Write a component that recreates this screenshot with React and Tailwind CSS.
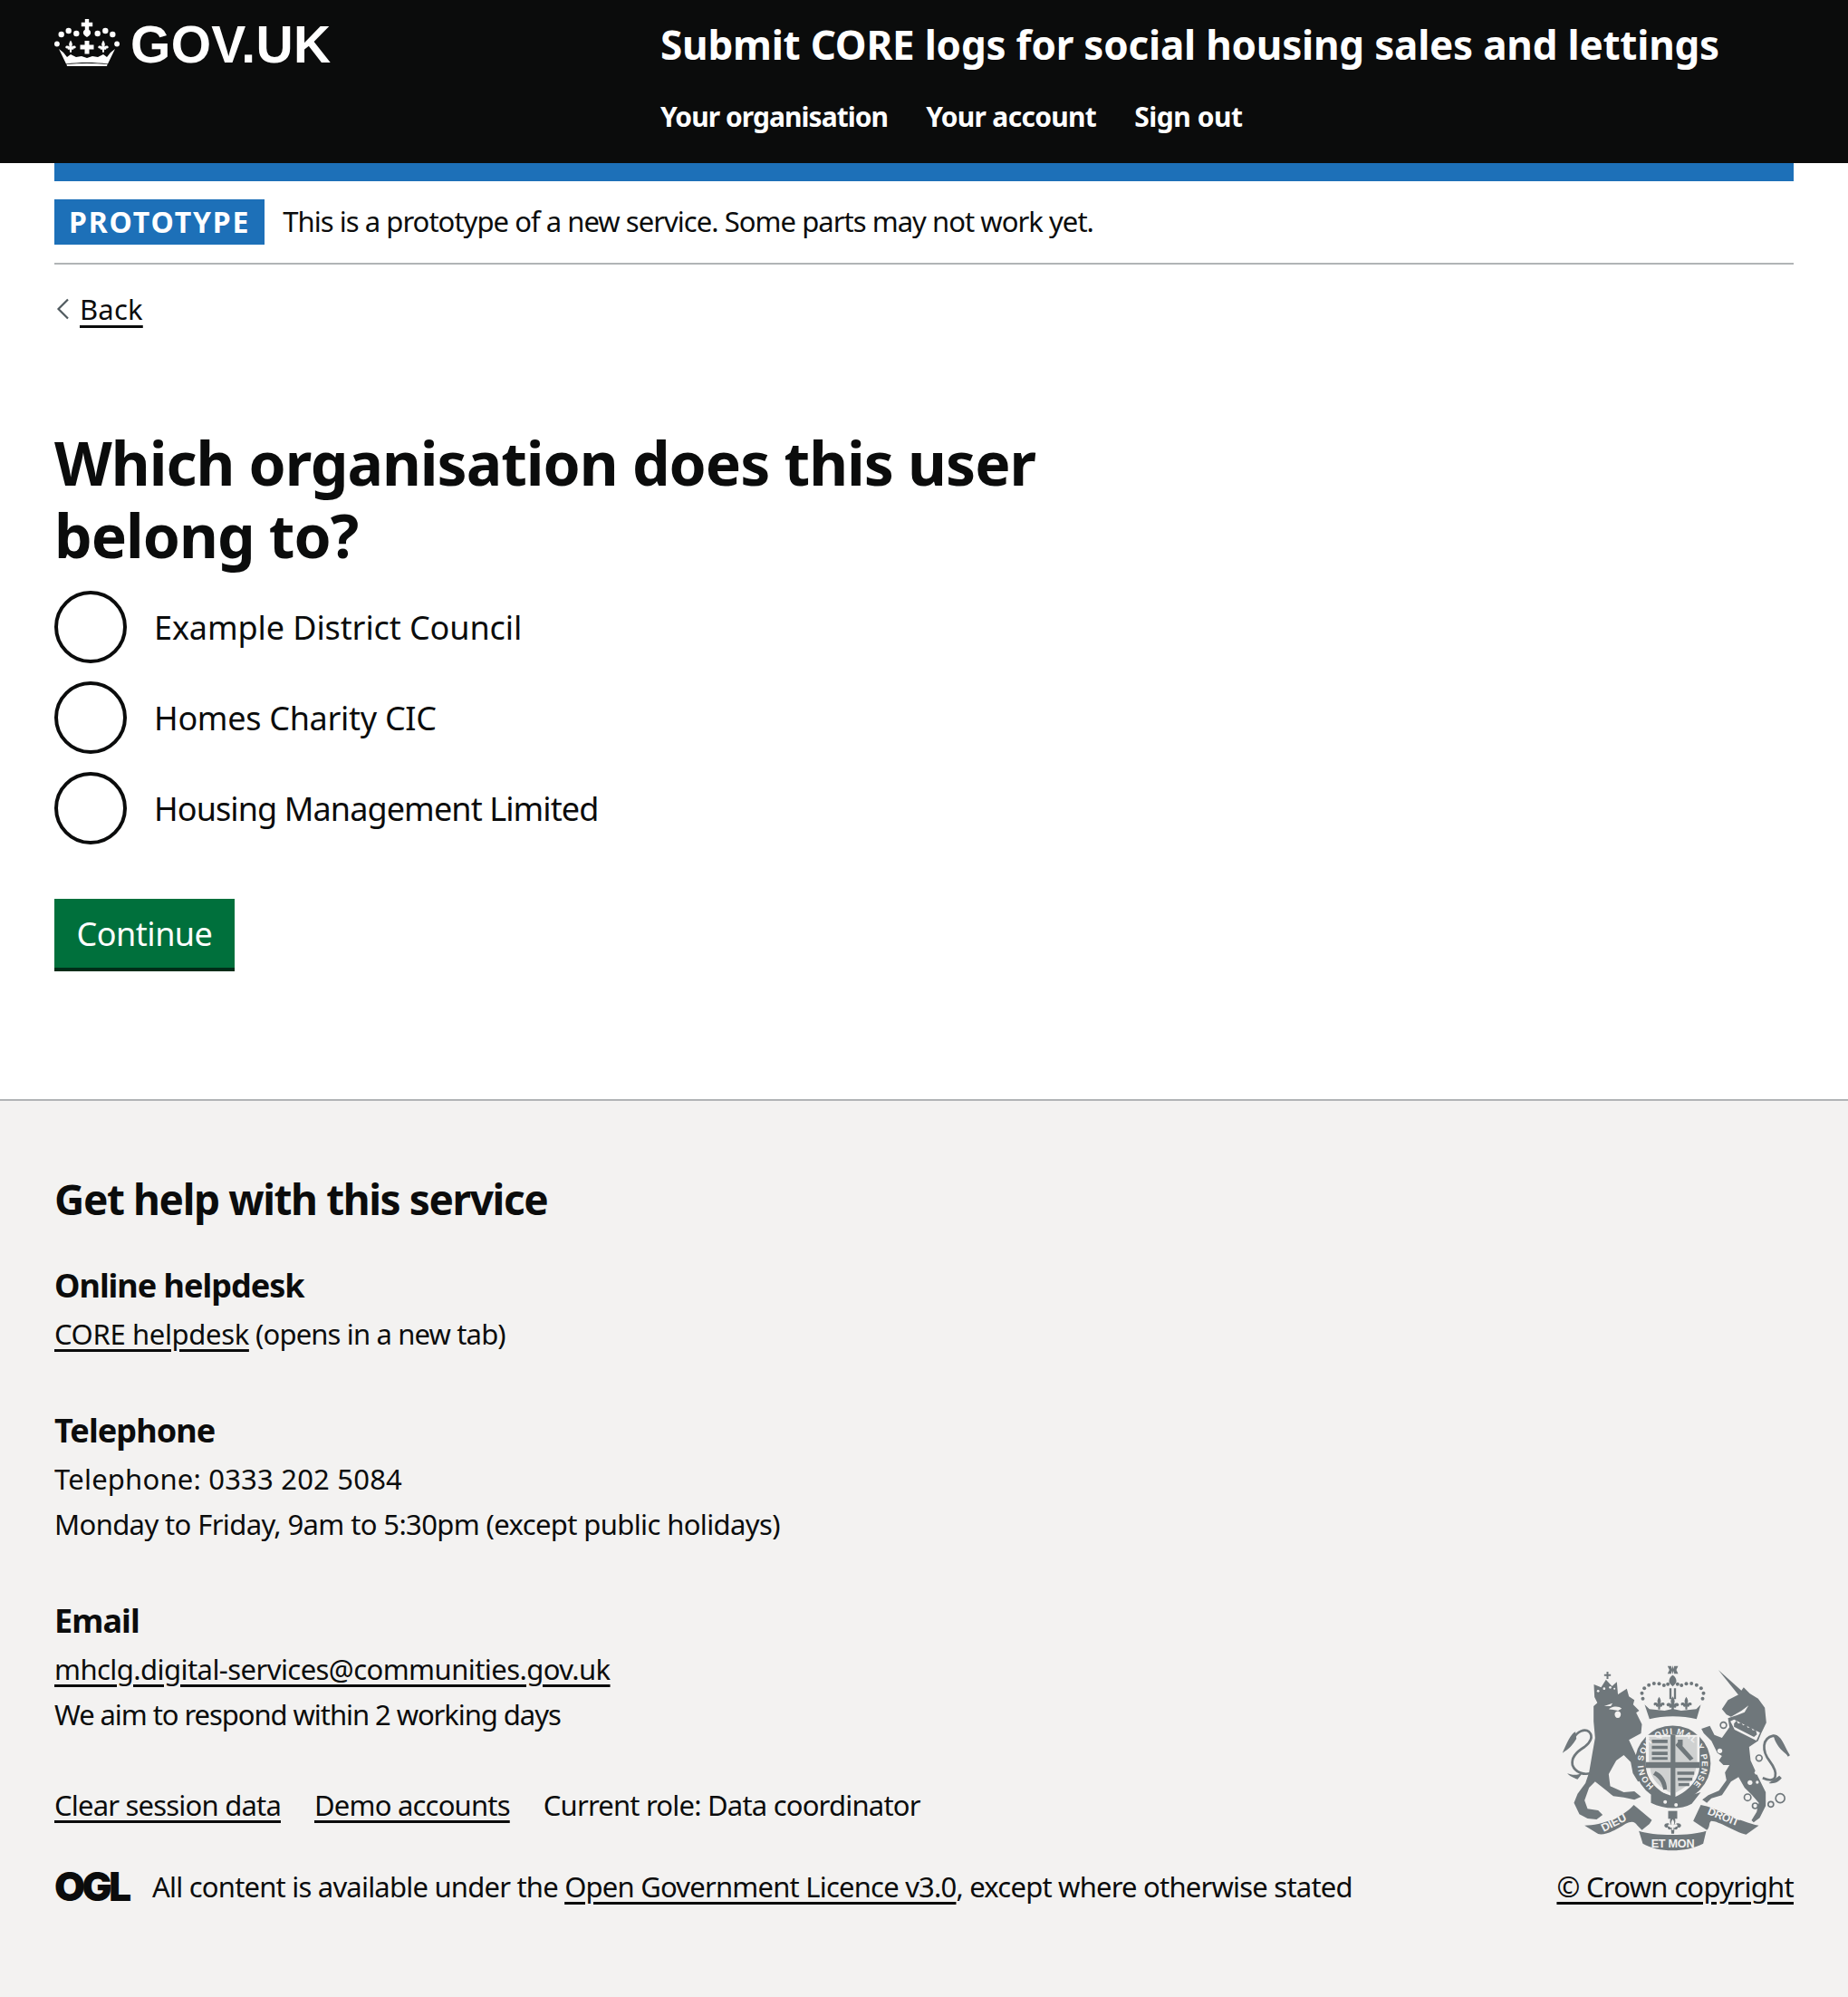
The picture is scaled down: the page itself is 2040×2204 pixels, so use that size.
import React from 'react';

const font = { fontFamily: '"Noto Sans", sans-serif' };
const crestText = { fontFamily: '"Liberation Sans", sans-serif', fontWeight: 700 };
const GREY = '#6f777b';
const PAPER = '#f3f2f1';

const Fleur = ({ x, y, s = 1 }) => (
  <g transform={`translate(${x} ${y}) scale(${s})`}>
    <path d="M0-8C2-5 2.5-3 1.2-.5 3-2 5.5-2 6-.2 6.3 1.3 4.5 2.2 3.5 1.2 4 3 2 3.500 1.200 2.500L1 6H-1L-1.200 2.500C-2 3.500-4 3-3.500 1.200-4.500 2.200-6.300 1.300-6-.2-5.500-2-3-2-1.200-.5-2.500-3-2-5 0-8Z" />
  </g>
);

const CrownLogo = () => (
  <svg viewBox="0 0 72 52" className="w-[72px] h-[52px] shrink-0" fill="white" aria-hidden="true">
    <path d="M33.800 0h4.400v3.800h4v4.400h-4v3.600c1.800 1 2.500 3 1.500 5-.8 1.500-2.100 2.400-3.700 3.200-1.600-.8-2.900-1.700-3.700-3.200-1-2-.3-4 1.500-5V8.200h-4V3.800h4z" />
    <circle cx="2.900" cy="27.500" r="2.900" />
    <circle cx="7.700" cy="17" r="3.200" />
    <circle cx="15.700" cy="13" r="3.200" />
    <circle cx="24.300" cy="16" r="3.200" />
    <circle cx="47.700" cy="16" r="3.200" />
    <circle cx="56.300" cy="13" r="3.200" />
    <circle cx="64.300" cy="17" r="3.200" />
    <circle cx="69.100" cy="27.500" r="2.900" />
    <Fleur x={18} y={31} s={0.95} />
    <Fleur x={54} y={31} s={0.95} />
    <path d="M33.500 24h5v4.500h5v5h-5v5h-5v-5h-5v-5h5z" />
    <path d="M5 33 10 37 14 42 18 39 24 42 30 41 36 43 42 41 48 42 54 39 58 42 62 37 67 33 59 49.500C44 47.500 28 47.500 13 49.500Z" />
    <path d="M13.500 50C28 48.500 44 48.500 58.500 50L58 52H14Z" />
  </svg>
);

const Crest = () => (
  <svg viewBox="130 60 755 615" className="w-[252px] h-[205px] mr-1" fill={GREY} aria-hidden="true">
    {/* lion */}
    <g transform="translate(120 45)">
      <path d="M115 150 140 128 190 115 225 92 232 118 250 130 246 145 266 165 256 172 275 210 272 240 232 262 258 318 285 378 280 395 262 400 245 372 238 335 215 312 190 330 165 375 170 415 215 435 250 432 272 450 250 460 215 452 180 448 158 430 120 400 100 420 85 462 95 490 130 495 145 510 125 525 95 522 68 508 50 470 62 440 88 405 100 370 112 300 120 255 115 200Z" />
      <path d="M105 372C85 378 55 372 45 345 40 320 60 300 85 285 105 270 115 250 100 235 85 222 60 235 48 258" fill="none" stroke={GREY} strokeWidth="8" />
      <path d="M55 235C40 240 25 275 12 305 35 290 45 280 58 258ZM28 372C40 378 60 380 78 372L62 392C50 388 35 382 28 372Z" />
      <path d="M150 150 178 140 172 150ZM165 160C180 148 200 150 208 158L196 165 180 162ZM186 172a10 12 0 1 0 18 0 10 10 0 0 0-18 0Z" fill={PAPER} />
      <path d="M118 120 132 148 196 116 192 70 176 84 156 62 140 88 116 78Z" />
      <path d="M150 44h8v-8h6v8h8v6h-8v10h-6V50h-8z" />
      <g fill={PAPER}>
        <circle cx="130" cy="100" r="4" /><circle cx="150" cy="92" r="4" /><circle cx="170" cy="88" r="4" /><circle cx="184" cy="92" r="3" />
      </g>
    </g>
    {/* unicorn */}
    <g transform="translate(510 45)">
      <path d="M138 30 216 100 205 113Z" />
      <path d="M150 160 170 130 205 112 222 88 242 108 270 125 292 155 297 205 280 240 270 265 240 285 245 330 270 385 295 435 295 480 275 520 255 535 248 528 265 500 272 470 250 445 225 420 205 385 180 400 150 445 115 455 100 470 85 460 105 445 140 430 165 395 160 370 175 345 155 345 140 330 150 315 135 305 115 265 90 240 82 225 110 215 125 245 150 255 175 220 170 190 200 180 225 170 238 148 215 165 180 185 165 178Z" />
      <path d="M178 200 190 194 276 238 264 264 192 228Z" fill={PAPER} />
      <path d="M190 208 198 198 204 208 214 204 220 214 230 210 236 222 246 218 252 230 262 228 266 244 256 252 190 218Z" />
      <path d="M285 388C335 410 338 372 308 332 282 298 282 256 320 248 345 248 352 285 372 315" fill="none" stroke={GREY} strokeWidth="8" />
      <path d="M320 245C345 245 358 285 372 316 350 300 335 285 325 262ZM305 405C325 408 340 400 348 388L340 380C325 390 315 398 305 405Z" />
      <g fill={PAPER}>
        <circle cx="143" cy="298" r="8" /><circle cx="265" cy="370" r="7" /><circle cx="243" cy="403" r="8" /><circle cx="267" cy="402" r="5" />
      </g>
      <g fill="none" stroke={GREY} strokeWidth="5">
        <circle cx="155" cy="213" r="10" /><circle cx="273" cy="322" r="10" /><circle cx="235" cy="452" r="11" /><circle cx="260" cy="480" r="9" /><circle cx="312" cy="475" r="9" /><circle cx="343" cy="455" r="15" />
      </g>
    </g>
    {/* big crown */}
    <path d="M480 62h12l2 10 3-12 3 12 2-10h13l-6 13 6 13h-13l-2-10-3 12-3-12-2 10h-12l6-13z" />
    <path d="M497 92c8 5 12 12 12 20 0 7-5 12-12 18-7-6-12-11-12-18 0-8 4-15 12-20Z" />
    <path d="M486 136h7v36h-7zM501 136h7v36h-7z" />
    {[[398, 170], [395, 152], [403, 136], [418, 125], [435, 120], [452, 121], [468, 126], [481, 122], [513, 122], [526, 126], [542, 121], [559, 120], [576, 125], [591, 136], [599, 152], [596, 170]].map(([cx, cy]) => (
      <circle key={`${cx}-${cy}`} cx={cx} cy={cy} r="6" />
    ))}
    <Fleur x={452} y={188} s={3} />
    <Fleur x={497} y={190} s={3.400} />
    <Fleur x={542} y={188} s={3} />
    <path d="M404 190 420 205 470 210 497 204 525 210 575 205 590 190 576 238C530 226 465 226 420 238Z" />
    {/* garter */}
    <circle cx="497" cy="385" r="107" fill="none" stroke={GREY} strokeWidth="37" />
    <path d="M408 290H586V390C586 445 540 482 498 498 455 482 408 445 408 390Z" fill={PAPER} />
    <path d="M418 380V296H490V380ZM506 296H578V380H506ZM422 400H490V482C455 465 426 440 422 400ZM506 400H574C570 440 541 465 506 482Z" fill="#cfd1d1" />
    <path d="M428 306h52v11h-52zM428 326h52v11h-52zM428 346h52v11h-52zM428 364h52v9h-52zM516 312l50 56-12 8-48-52zM514 306h16v20h-16zM512 412h56v10h-56zM514 432h48v10h-48zM516 450h36v10h-36zM440 410c20 8 38 30 38 60l-12 2c-4-22-14-40-34-50z" />
    <path d="M490 290h16v208h-16zM408 380h178v20H408z" fill={GREY} />
    <path id="garter-arc" d="M435 459A97 97 0 1 1 559 459" fill="none" />
    <text style={crestText} fontSize="28" fill={PAPER} textLength="466">
      <textPath href="#garter-arc">HONI SOIT QUI MAL Y PENSE</textPath>
    </text>
    <path d="M425 490 445 475 520 502 590 480 560 518C520 540 465 535 425 515Z" />
    <circle cx="472" cy="512" r="6" fill={PAPER} />
    <circle cx="508" cy="522" r="6" fill={PAPER} />
    {/* rose */}
    <path d="M482 542h30v26h-30z" />
    <g>
      <Fleur x={497} y={590} s={4.600} />
      <g fill={PAPER}><Fleur x={497} y={590} s={2.600} /></g>
    </g>
    {/* motto ribbon */}
    <path d="M205 590C260 590 330 565 368 522L428 572 420 585 395 605 380 590C370 575 360 575 340 585 310 605 270 625 250 618Z" />
    <path d="M385 608C430 625 560 625 608 608L598 650C540 680 450 680 398 650Z" />
    <path d="M590 522C640 530 720 580 782 590L740 620C700 610 650 575 625 575 615 580 622 595 610 605L565 575Z" />
    <text style={crestText} fontSize="38" fill={PAPER} transform="translate(268 612) rotate(-27)">DIEU</text>
    <text style={crestText} fontSize="38" fill={PAPER} x="497" y="662" textAnchor="middle">ET MON</text>
    <text style={crestText} fontSize="36" fill={PAPER} transform="translate(610 552) rotate(22)">DROIT</text>
  </svg>
);

const Radio = ({ label, tracking }) => (
  <div className="flex items-center h-20 mb-5 last:mb-0">
    <span className="w-20 h-20 rounded-full border-4 border-[#0b0c0c] bg-white shrink-0" />
    <span className={`ml-[30px] pt-[2px] text-[36px] leading-none text-[#0b0c0c] ${tracking}`}>{label}</span>
  </div>
);

const App = () => {
  return (
    <div style={font} className="min-h-[2204px] flex flex-col bg-white text-[#0b0c0c]">
      <header className="h-[180px] bg-[#0b0c0c] px-[60px] flex shrink-0">
        <div className="w-[669px] flex items-start pt-[21px] gap-3">
          <CrownLogo />
          <span className="text-[57px] leading-[57px] font-bold text-white tracking-[0.3px]" style={{ fontFamily: '"Liberation Sans", sans-serif' }}>GOV.UK</span>
        </div>
        <div className="pt-[21px]">
          <div className="text-[44px] leading-[56px] font-bold text-white tracking-[-0.22px]">Submit CORE logs for social housing sales and lettings</div>
          <nav className="flex gap-[42px] mt-[24px] text-[30px] leading-[56px] font-bold text-white">
            <a className="tracking-[-0.95px]">Your organisation</a>
            <a className="tracking-[-0.7px]">Your account</a>
            <a className="tracking-[-0.45px]">Sign out</a>
          </nav>
        </div>
      </header>

      <main className="mx-[60px] h-[1033px] shrink-0">
        <div className="h-5 bg-[#1d70b8]" />
        <div className="flex items-center h-[92px] border-b-2 border-[#b1b4b6]">
          <strong className="bg-[#1d70b8] text-white text-[32px] leading-[50px] h-[50px] px-4 font-bold tracking-[1.85px]">PROTOTYPE</strong>
          <span className="ml-5 pb-[2px] text-[31px] tracking-[-0.97px]">This is a prototype of a new service. Some parts may not work yet.</span>
        </div>
        <a className="flex items-center mt-[29px] h-10 text-[31px] leading-10">
          <svg viewBox="0 0 14 24" className="w-[14px] h-6 ml-[2px] mr-3" fill="none" stroke="#505a5f" strokeWidth="2.200" aria-hidden="true">
            <path d="M13 1.500 2.500 12 13 22.500" />
          </svg>
          <span className="underline decoration-[3px] underline-offset-[6px] tracking-[0.2px]">Back</span>
        </a>
        <h1 className="mt-[109px] max-w-[1200px] text-[66px] leading-[80px] font-bold tracking-[-1px]">Which organisation does this user belong to?</h1>
        <div className="mt-[22px]">
          <Radio label="Example District Council" tracking="tracking-[-0.1px]" />
          <Radio label="Homes Charity CIC" tracking="tracking-[-0.3px]" />
          <Radio label="Housing Management Limited" tracking="tracking-[-0.9px]" />
        </div>
        <button className="mt-[60px] pt-[2px] h-20 w-[199px] bg-[#00703c] border-b-4 border-[#002d18] text-white text-[36px] leading-none text-center tracking-[-0.5px]">Continue</button>
      </main>

      <footer className="flex-1 bg-[#f3f2f1] border-t-2 border-[#b1b4b6] px-[60px] pt-[76px]">
        <h2 className="text-[46px] leading-[64px] font-bold tracking-[-1.4px]">Get help with this service</h2>
        <div className="mt-[39px] text-[31px] leading-[50px]">
          <h3 className="text-[36px] leading-[50px] font-bold tracking-[-1px]">Online helpdesk</h3>
          <p className="mt-[3px] tracking-[-0.85px]"><a className="underline underline-offset-[5px] tracking-[-0.35px]">CORE helpdesk</a> (opens in a new tab)</p>
          <h3 className="mt-[57px] text-[36px] leading-[50px] font-bold tracking-[-0.9px]">Telephone</h3>
          <p className="mt-[3px] tracking-[0.2px]">Telephone: 0333 202 5084</p>
          <p className="tracking-[-0.62px]">Monday to Friday, 9am to 5:30pm (except public holidays)</p>
          <h3 className="mt-[57px] text-[36px] leading-[50px] font-bold tracking-[-0.9px]">Email</h3>
          <p className="mt-[3px] tracking-[-0.56px]"><a className="underline underline-offset-[5px]">mhclg.digital-services@communities.gov.uk</a></p>
          <p className="tracking-[-1.07px]">We aim to respond within 2 working days</p>
        </div>
        <div className="-mt-[79px] flex justify-between items-end text-[31px] leading-[50px] tracking-[-0.8px]">
          <div>
            <div className="flex gap-[37px]">
              <a className="underline underline-offset-[5px]">Clear session data</a>
              <a className="underline underline-offset-[5px]">Demo accounts</a>
              <span>Current role: Data coordinator</span>
            </div>
            <div className="flex items-center mt-[40px]">
              <span className="text-[44px] leading-[50px] font-black tracking-[-3.500px] w-[108px]" style={{ fontFamily: 'Inter, sans-serif' }}>OGL</span>
              <span className="tracking-[-0.79px]">All content is available under the <a className="underline underline-offset-[5px]">Open Government Licence v3.0</a>, except where otherwise stated</span>
            </div>
          </div>
          <div className="flex flex-col items-end">
            <Crest />
            <a className="mt-[14px] underline underline-offset-[5px] tracking-[-0.7px]">© Crown copyright</a>
          </div>
        </div>
      </footer>
    </div>
  );
};

export default App;
